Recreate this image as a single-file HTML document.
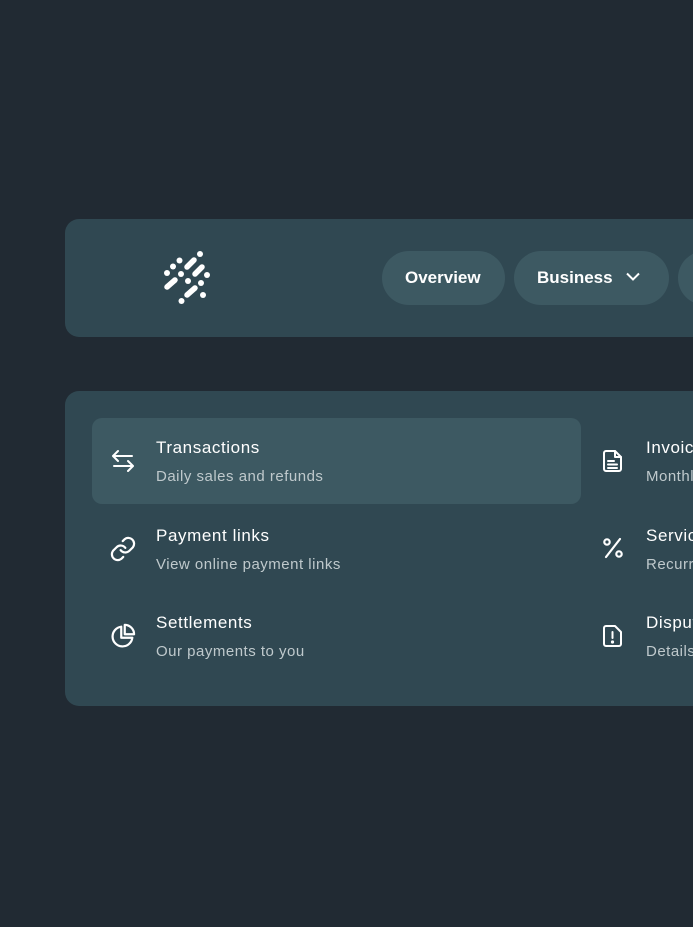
<!DOCTYPE html>
<html><head><style>
body{margin:0;width:693px;height:927px;background:#212a33;overflow:hidden;position:relative;font-family:"Liberation Sans",sans-serif;}
.card{position:absolute;left:65px;width:660px;background:#304852;border-radius:14px;}
.pill{position:absolute;top:251px;height:54px;background:#3d5962;border-radius:27px;color:#fff;font-weight:bold;font-size:17px;line-height:54px;box-sizing:border-box;}
.hl{position:absolute;left:92px;top:418px;width:489px;height:86px;background:#3d5962;border-radius:10px;}
.t{position:absolute;color:#fff;font-size:17px;white-space:nowrap;letter-spacing:0.6px;}
.s{position:absolute;color:#bfc9cc;font-size:15px;white-space:nowrap;letter-spacing:0.5px;}
svg.i{position:absolute;}
</style></head><body>
<div class="card" style="top:219px;height:118px"></div>
<svg style="position:absolute;left:150px;top:240px" width="80" height="80" viewBox="150 240 80 80" fill="#fff" stroke="#fff" stroke-linecap="round">
<circle cx="200" cy="254" r="3" stroke="none"/><circle cx="179.5" cy="260.5" r="3" stroke="none"/><circle cx="173" cy="266.5" r="3" stroke="none"/><circle cx="167" cy="273" r="3" stroke="none"/><circle cx="181" cy="274" r="3" stroke="none"/><circle cx="188" cy="281" r="3" stroke="none"/><circle cx="207" cy="275" r="3" stroke="none"/><circle cx="201" cy="283" r="3" stroke="none"/><circle cx="203" cy="295" r="3" stroke="none"/><circle cx="181.5" cy="301" r="3" stroke="none"/>
<g stroke-width="5.5" fill="none"><line x1="187" y1="267" x2="194" y2="260"/><line x1="195" y1="274" x2="202" y2="267"/><line x1="167" y1="287" x2="175" y2="280"/><line x1="187" y1="295" x2="195" y2="288"/></g>
</svg>
<div class="pill" style="left:382px;width:123px;padding-left:23px">Overview</div>
<div class="pill" style="left:514px;width:155px;padding-left:23px">Business
<svg style="position:absolute;left:112px;top:21px" width="14" height="10" viewBox="0 0 14 10"><path d="M1 1.5 7 7.5 13 1.5" stroke="#fff" stroke-width="2" fill="none"/></svg></div>
<div class="pill" style="left:678px;width:60px"></div>

<div class="card" style="top:391px;height:315px"></div>
<div class="hl"></div>
<div class="t" style="left:156px;top:438px">Transactions</div><div class="s" style="left:156px;top:468px">Daily sales and refunds</div>
<div class="t" style="left:156px;top:526px">Payment links</div><div class="s" style="left:156px;top:556px">View online payment links</div>
<div class="t" style="left:156px;top:613px">Settlements</div><div class="s" style="left:156px;top:643px">Our payments to you</div>
<div class="t" style="left:646px;top:438px">Invoices</div><div class="s" style="left:646px;top:468px">Monthly</div>
<div class="t" style="left:646px;top:526px">Services</div><div class="s" style="left:646px;top:556px">Recurring</div>
<div class="t" style="left:646px;top:613px">Disputes</div><div class="s" style="left:646px;top:643px">Details</div>

<svg class="i" style="left:110px;top:448px" width="26" height="26" viewBox="0 0 26 26" fill="none" stroke="#fff" stroke-width="2" stroke-linecap="round" stroke-linejoin="round"><path d="M22 8H3M8 3 3 8l5 5M4 18h19M18 13l5 5-5 5"/></svg>
<svg class="i" style="left:109px;top:535px" width="28" height="28" viewBox="0 0 24 24" fill="none" stroke="#fff" stroke-width="1.9" stroke-linecap="round"><path d="M10 13a5 5 0 0 0 7.5.5l3-3a5 5 0 0 0-7-7l-1.7 1.7"/><path d="M14 11a5 5 0 0 0-7.5-.5l-3 3a5 5 0 0 0 7 7l1.7-1.7"/></svg>
<svg class="i" style="left:109px;top:622px" width="28" height="28" viewBox="0 0 24 24" fill="none" stroke="#fff" stroke-width="1.9" stroke-linejoin="round"><path d="M10.5 4A8.5 8.5 0 1 0 20 13.5h-9.5z"/><path d="M13.5 2.5v8h8a8 8 0 0 0-8-8z"/></svg>
<svg class="i" style="left:601px;top:448px" width="24" height="26" viewBox="0 0 24 26" fill="none" stroke="#fff" stroke-width="2" stroke-linejoin="round" stroke-linecap="round"><path d="M5 3h9l6 6v12a2 2 0 0 1-2 2H5a2 2 0 0 1-2-2V5a2 2 0 0 1 2-2z"/><path d="M14 3v6h6M7 13h6M7 16.5h9M7 20h9"/></svg>
<svg class="i" style="left:601px;top:536px" width="24" height="24" viewBox="0 0 24 24" fill="none" stroke="#fff" stroke-width="2.2" stroke-linecap="round"><path d="M19 3 5 21"/><circle cx="6" cy="6" r="2.7"/><circle cx="18" cy="18" r="2.7"/></svg>
<svg class="i" style="left:601px;top:623px" width="24" height="26" viewBox="0 0 24 26" fill="none" stroke="#fff" stroke-width="2" stroke-linejoin="round" stroke-linecap="round"><path d="M5 3h9l6 6v12a2 2 0 0 1-2 2H5a2 2 0 0 1-2-2V5a2 2 0 0 1 2-2z"/><path d="M11.5 9v6"/><circle cx="11.5" cy="19" r="0.6" fill="#fff"/></svg>
</body></html>
